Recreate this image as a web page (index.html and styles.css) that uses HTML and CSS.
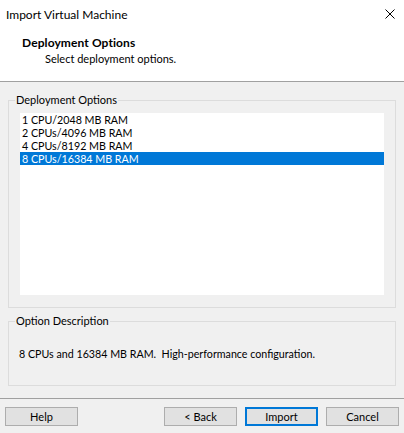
FILE: index.html
```
<!DOCTYPE html>
<html>
<head>
<meta charset="utf-8">
<title>Import Virtual Machine</title>
<link rel="stylesheet" href="styles.css">
</head>
<body>
<div class="dialog">
  <div class="titlebar">
    <span class="title">Import Virtual Machine</span>
    <svg class="close" width="10" height="10" viewBox="0 0 10 10"><path d="M0.5 0.5L9.5 9.5M9.5 0.5L0.5 9.5" stroke="#000" stroke-width="1"/></svg>
  </div>
  <div class="header">
    <div class="h-title">Deployment Options</div>
    <div class="h-sub">Select deployment options.</div>
  </div>
  <div class="content">
    <fieldset class="group group-list">
      <legend>Deployment Options</legend>
      <div class="listbox">
        <div class="item">1 CPU/2048 MB RAM</div>
        <div class="item">2 CPUs/4096 MB RAM</div>
        <div class="item">4 CPUs/8192 MB RAM</div>
        <div class="item selected">8 CPUs/16384 MB RAM</div>
      </div>
    </fieldset>
    <fieldset class="group group-desc">
      <legend>Option Description</legend>
      <div class="desc">8 CPUs and 16384 MB RAM.  High-performance configuration.</div>
    </fieldset>
  </div>
  <div class="sep"></div>
  <div class="buttons">
    <button class="btn">Help</button>
    <div class="spacer"></div>
    <button class="btn">&lt; Back</button>
    <button class="btn default">Import</button>
    <button class="btn">Cancel</button>
  </div>
</div>
</body>
</html>
```
FILE: styles.css
```
html, body {
  margin: 0;
  padding: 0;
}
body {
  background: #f0f0f0;
  font-family: Lato, "Liberation Sans", sans-serif;
  color: #000;
  font-size: 10.7px;
}
.dialog {
  width: 404px;
  height: 433px;
  display: flex;
  flex-direction: column;
}
.titlebar {
  height: 30px;
  background: #fff;
  display: flex;
  align-items: center;
  padding: 0 9px 0 6px;
  justify-content: space-between;
}
.title {
  font-size: 12px;
  line-height: 14px;
}
.close {
  display: block;
  margin-top: -2px;
}
.header {
  background: #fff;
  height: 51px;
  border-bottom: 1px solid #a0a0a0;
  padding-left: 22px;
  box-sizing: content-box;
}
.h-title {
  font-weight: bold;
  font-size: 12px;
  letter-spacing: 0.1px;
  line-height: 14px;
  padding-top: 6px;
}
.h-sub {
  font-size: 11px;
  line-height: 14px;
  padding-top: 2px;
  padding-left: 23px;
}
.content {
  padding: 11px 8px 0 8px;
  display: flex;
  flex-direction: column;
}
.group {
  margin: 0;
  border: 1px solid #dcdcdc;
  min-width: 0;
}
.group legend {
  line-height: 14px;
  padding: 0 1px;
  margin-left: -5px;
  font-size: 11px;
}
.group-list {
  padding: 6px 11px 12px 11px;
}
.listbox {
  background: #fff;
  height: 182px;
}
.item {
  height: 13px;
  line-height: 13px;
  padding-left: 2px;
  white-space: nowrap;
}
.item.selected {
  background: #0078d7;
  color: #fff;
}
.group-desc {
  margin-top: 6px;
  padding: 19px 10px 24px 10px;
}
.group-desc legend {
  margin-left: -4px;
}
.desc {
  line-height: 14px;
  white-space: pre;
}
.sep {
  margin-top: 12px;
  height: 1px;
  background: #a0a0a0;
}
.buttons {
  display: flex;
  padding: 8px 5px 0 5px;
  gap: 8px;
}
.spacer {
  flex: 1;
}
.btn {
  width: 73px;
  height: 19px;
  box-sizing: border-box;
  background: #e1e1e1;
  border: 1px solid #adadad;
  font-family: Lato, "Liberation Sans", sans-serif;
  font-size: 11px;
  color: #000;
  padding: 0;
  margin: 0;
}
.btn.default {
  border: 2px solid #0078d7;
}
```
